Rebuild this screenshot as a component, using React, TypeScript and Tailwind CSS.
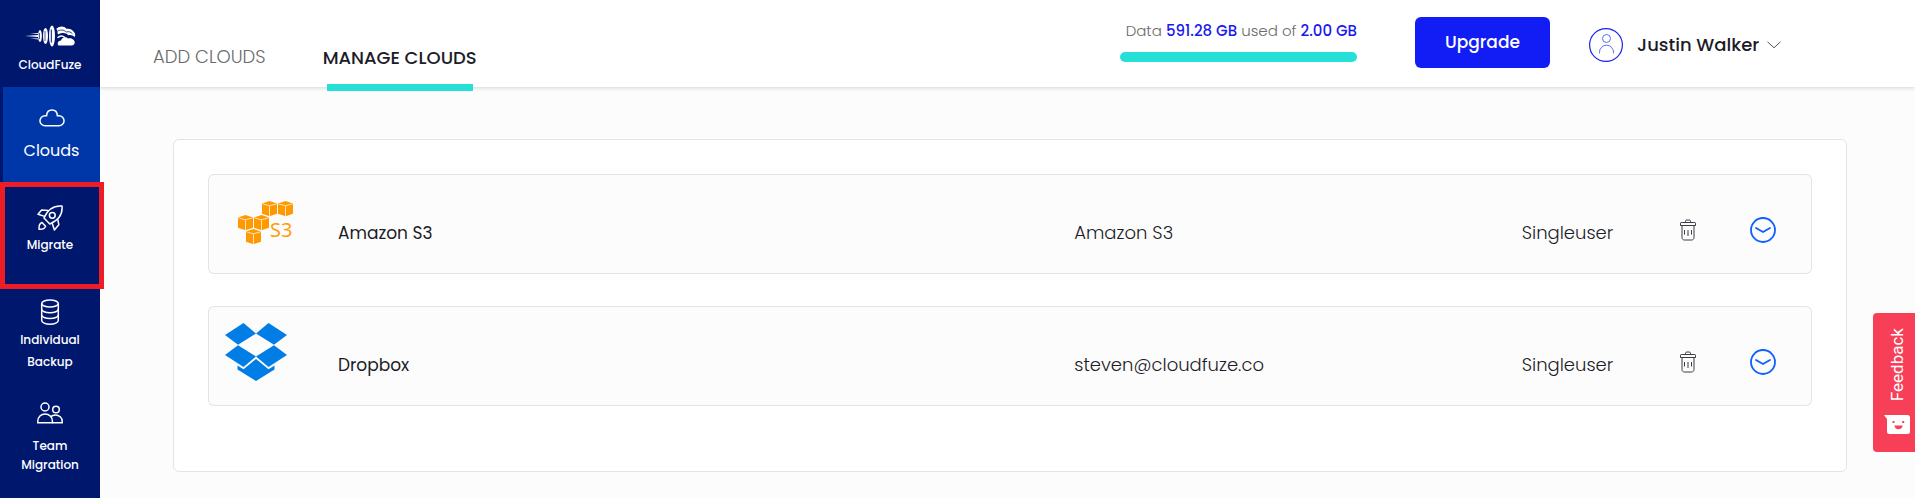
import type { ReactNode } from "react";

type CloudAccount = {
  id: string;
  name: string;
  account: string;
  type: string;
  logo: ReactNode;
};

function CloudFuzeLogo() {
  return (
    <svg width="52" height="22" viewBox="0 0 52 22" fill="none" aria-hidden="true">
      <path d="M1 11 14 10v2z M6 8.300l8-.3v.9z M6 13.300l8 .2v.9z" fill="#fff" />
      <g fill="#fff">
        <ellipse cx="16" cy="11" rx="1.900" ry="6" />
        <ellipse cx="21.500" cy="11" rx="2.500" ry="8" />
        <ellipse cx="28" cy="11" rx="3" ry="10.500" />
      </g>
      <g stroke="#00176e">
        <path d="M15.500 8v6M21 6v10" strokeWidth=".7" />
        <path d="M27.300 4.500v13" strokeWidth="1" />
      </g>
      <path
        d="M32.500 3.500C36 .6 40 .8 42.500 3.800c3.200-.6 5.600.4 7 2.700 1.600 1.500 2.200 3.500 1.300 5.500-2-2-4.500-2.500-6.500-1.800-2.300-2.600-6-2.900-10.300-.7z"
        fill="#fff"
      />
      <path d="M33 6.400c3-2 7-1.800 9.200.6 2.400-.8 5 0 6.300 1.800" stroke="#00176e" strokeWidth=".8" />
      <path
        d="M34.500 20.500c-2-2 .2-5.200 2.500-5 1.200-3.400 5-4.200 7.200-2.100 3-.8 6.300 1.200 6.500 3.800.1 1.900-1.200 3.300-3 3.300z"
        fill="#fff"
      />
      <path d="M33.500 12.800c2.500-2.200 5.500-2 7.400-.3" stroke="#fff" strokeWidth="1.500" />
    </svg>
  );
}

function CloudIcon() {
  return (
    <svg width="26" height="18" viewBox="0 0 26 18" fill="none" stroke="#fff" strokeWidth="1.500" aria-hidden="true">
      <path d="M6 16.800h14a5 5 0 0 0 0-10.100h-1.600C18.200 3.300 16 1 13 1S7.800 3.300 7.600 6.700H6a5 5 0 0 0 0 10.100z" />
    </svg>
  );
}

function RocketIcon() {
  return (
    <svg
      width="26"
      height="26"
      viewBox="0 0 26 26"
      fill="none"
      stroke="#fff"
      strokeWidth="1.500"
      strokeLinejoin="round"
      aria-hidden="true"
    >
      <path d="M25 1C17 .4 11 3.500 7 13l5.800 6C22 15.200 25.800 9 25 1z" />
      <circle cx="15.300" cy="10.300" r="2.900" />
      <path d="M11.300 5.600 4.600 5 1 9.200 7.600 11.400" />
      <path d="M20.800 14.500l1 5.200L17.400 25l-2.200-6.800" />
      <path d="M5 17.500c-2.600.9-3.200 3.200-3 6.800 3.400.3 5.600-.6 6.600-3z" />
    </svg>
  );
}

function DatabaseIcon() {
  return (
    <svg width="20" height="26" viewBox="0 0 20 26" fill="none" stroke="#fff" strokeWidth="1.500" aria-hidden="true">
      <ellipse cx="10" cy="4.500" rx="8.300" ry="3.600" />
      <path d="M1.700 4.500v17c0 2 3.700 3.700 8.300 3.700s8.300-1.700 8.300-3.700v-17" />
      <path d="M1.700 10.200c0 2 3.700 3.600 8.300 3.600s8.300-1.600 8.300-3.600M1.700 15.900c0 2 3.700 3.600 8.300 3.600s8.300-1.600 8.300-3.600" />
    </svg>
  );
}

function TeamIcon() {
  return (
    <svg width="26" height="22" viewBox="0 0 26 22" fill="none" stroke="#fff" strokeWidth="1.500" aria-hidden="true">
      <circle cx="8" cy="5" r="4" />
      <circle cx="19" cy="7.500" r="3.300" />
      <path d="M.8 20.800v-1.600a7.300 7.300 0 0 1 14.600 0v1.600z" />
      <path d="M13.800 14.600c1.200-1.100 2.800-1.700 4.600-1.700 3.800 0 6.800 2.800 6.800 6.400v1.500h-9.800" />
    </svg>
  );
}

function Cube({ x, y }: { x: number; y: number }) {
  return (
    <g transform={`translate(${x} ${y})`}>
      <path d="M0 2.400 7.500 0 15 2.400v10.400L7.500 15.200 0 12.800z" fill="#ff9900" />
      <path d="M.4 2.800 7.500 4.800l7.100-2M7.500 4.800V15" stroke="#ffe3b8" strokeWidth="1" fill="none" />
    </g>
  );
}

function AmazonS3Logo() {
  return (
    <svg width="56" height="44" viewBox="0 0 56 44" className="mb-[3px] ml-[29px]" aria-hidden="true">
      <Cube x={24} y={0} />
      <Cube x={40} y={0} />
      <Cube x={0} y={14} />
      <Cube x={16} y={14} />
      <Cube x={8} y={28} />
      <text x="32" y="36" fontSize="20" fontWeight="500" fontFamily="Open Sans, sans-serif" fill="#ff9900">
        S3
      </text>
    </svg>
  );
}

function DropboxLogo() {
  return (
    <svg width="62" height="58" viewBox="0 0 62 58" fill="#007ee5" className="mb-2 ml-4" aria-hidden="true">
      <path d="M18.500 0 31 10.400 13 21.800 0 12z" />
      <path d="M43.500 0 31 10.400l18 11.400L62 12z" />
      <path d="M13 22.200 31 33.600 18.500 44 0 32z" />
      <path d="M49 22.200 31 33.600 43.500 44 62 32z" />
      <path d="M31 36 43.500 46.300 49.500 42.600v3.800L31 58 12.500 46.400v-3.800l6 3.700z" />
    </svg>
  );
}

function TrashIcon() {
  return (
    <svg width="16" height="22" viewBox="0 0 16 22" fill="none" stroke="#3a3a44" aria-hidden="true">
      <path d="M5.500 3V2.300C5.500 1.500 6 1 6.800 1h2.400c.8 0 1.300.5 1.300 1.300V3" />
      <path d="M.5 6.500V4.200c0-.5.300-.7.8-.7h13.400c.5 0 .8.200.8.700v2.300z" />
      <path d="M2 6.500v12c0 1.600 1 2.500 2.500 2.500h7c1.500 0 2.500-.9 2.500-2.500v-12" />
      <path d="M4.500 11v4.500M8 11v6M11.500 11v4.500" />
    </svg>
  );
}

function ExpandIcon() {
  return (
    <svg width="26" height="26" viewBox="0 0 26 26" fill="none" stroke="#0d5fff" strokeWidth="1.800" aria-hidden="true">
      <circle cx="13" cy="13" r="12" />
      <path d="M6 11l7 4 7-4" strokeLinecap="round" />
    </svg>
  );
}

const accounts: CloudAccount[] = [
  { id: "s3", name: "Amazon S3", account: "Amazon S3", type: "Singleuser", logo: <AmazonS3Logo /> },
  { id: "dropbox", name: "Dropbox", account: "steven@cloudfuze.co", type: "Singleuser", logo: <DropboxLogo /> },
];

function Sidebar() {
  return (
    <aside className="w-[100px] shrink-0 bg-[#00176e] text-center text-xs font-medium text-white">
      <a href="#home" className="flex h-[87px] flex-col items-center gap-2 pt-[25px] leading-5">
        <CloudFuzeLogo />
        CloudFuze
      </a>
      <nav>
        <a
          href="#clouds"
          className="ml-[3px] flex h-[95px] flex-col items-center gap-3 bg-[#0037a8] pt-[22px] text-base leading-6 font-normal"
        >
          <CloudIcon />
          Clouds
        </a>
        <a href="#migrate" className="relative flex h-[107px] flex-col items-center gap-1 pt-[23px] leading-5">
          <RocketIcon />
          Migrate
          <span className="absolute inset-y-0 -right-1 left-0 z-10 border-[5px] border-[#ee1c25]" />
        </a>
        <a href="#backup" className="flex h-[113px] flex-col items-center gap-1 pt-[10px] leading-[22px]">
          <DatabaseIcon />
          <span>
            Individual
            <br />
            Backup
          </span>
        </a>
        <a href="#team" className="flex flex-col items-center gap-3 pb-5 leading-[19px]">
          <TeamIcon />
          <span>
            Team
            <br />
            Migration
          </span>
        </a>
      </nav>
    </aside>
  );
}

function Header() {
  return (
    <header className="flex h-[87px] bg-white shadow-[0_1px_4px_rgba(0,0,0,0.16)]">
      <nav className="flex gap-[57px] pl-[53px] text-lg">
        <a href="#add" className="flex items-center pt-[26px] font-light text-[#6b6b6b]">
          ADD CLOUDS
        </a>
        <a href="#manage" aria-current="page" className="relative flex items-center pt-7 font-medium text-[#1c1c28]">
          MANAGE CLOUDS
          <span className="absolute inset-x-1 -bottom-1 h-[7px] bg-[#26e0d8]" />
        </a>
      </nav>
      <div className="ml-auto flex items-start pr-[134px]">
        <div className="w-[237px] pt-5 text-right text-[15px] text-[#1a1aee]">
          <p className="leading-[22px] whitespace-nowrap">
            <span className="font-light text-[#6b6b6b]">Data </span>
            <span className="font-medium">591.28 GB</span>
            <span className="font-light text-[#6b6b6b]"> used of </span>
            <span className="font-medium">2.00 GB</span>
          </p>
          <div className="mt-[10px] h-[10px] rounded-full bg-[#26e0d8]" />
        </div>
        <button
          type="button"
          className="mt-[17px] ml-[58px] h-[51px] w-[135px] rounded-md bg-[#121df5] text-[17px] font-medium text-white"
        >
          Upgrade
        </button>
        <button type="button" className="mt-7 ml-[39px] flex items-center text-[#1c1c28]">
          <svg width="34" height="34" viewBox="0 0 34 34" fill="none" stroke="#1a22f0" aria-hidden="true">
            <circle cx="17" cy="17" r="16.400" strokeWidth="1.200" />
            <g stroke="#5a6cf5">
              <circle cx="17.500" cy="10.500" r="4" />
              <path d="M10.500 25.500v-1.300a7 7 0 0 1 14 0v1.300" />
            </g>
          </svg>
          <span className="ml-[14px] w-[130px] text-left text-lg font-medium whitespace-nowrap">Justin Walker</span>
          <svg width="14" height="8" viewBox="0 0 14 8" fill="none" stroke="#555" aria-hidden="true">
            <path d="M.5.8 7 6.800 13.500.8" />
          </svg>
        </button>
      </div>
    </header>
  );
}

function CloudTable() {
  return (
    <table className="w-full table-fixed border-separate border-spacing-x-0 border-spacing-y-8 text-left text-lg text-[#1c1c28]">
      <colgroup>
        <col className="w-[130px]" />
        <col className="w-[45.9%]" />
        <col className="w-[27.9%]" />
        <col />
        <col className="w-[76px]" />
        <col className="w-[86px]" />
      </colgroup>
      <tbody>
        {accounts.map((item) => (
          <tr key={item.id} className="h-[100px] *:border-y *:border-[#e4e4e4] *:bg-[#fcfcfc]">
            <td className="rounded-l-md border-l">{item.logo}</td>
            <th scope="row" className="pt-[18px] text-[17px] font-normal">
              {item.name}
            </th>
            <td className="pt-[18px] font-light">{item.account}</td>
            <td className="pt-[18px] font-light">{item.type}</td>
            <td className="pt-3">
              <button type="button" aria-label={`Delete ${item.name}`} className="mx-auto block">
                <TrashIcon />
              </button>
            </td>
            <td className="rounded-r-md border-r pt-3 pr-3">
              <button type="button" aria-label={`Expand ${item.name}`} className="mx-auto block">
                <ExpandIcon />
              </button>
            </td>
          </tr>
        ))}
      </tbody>
    </table>
  );
}

function FeedbackTab() {
  return (
    <button
      type="button"
      className="fixed top-[313px] right-0 flex h-[139px] w-[42px] flex-col items-center justify-between rounded-l bg-[#f74058] pt-[15px] pb-[18px] pl-[6px] text-white"
    >
      <span className="rotate-180 font-['Roboto','Liberation_Sans',sans-serif] text-[17px] leading-5 [writing-mode:vertical-rl]">
        Feedback
      </span>
      <svg width="26" height="19" viewBox="0 0 26 19" aria-hidden="true">
        <path d="M0 0h23.500A2.500 2.500 0 0 1 26 2.500v14a2.500 2.500 0 0 1-2.500 2.500h-18A2.500 2.500 0 0 1 3 16.500V4z" fill="#fff" />
        <path d="M8.500 6h2v2h-2zM18.200 6h2v2h-2zM10.500 10.500h8c0 5-8 5-8 0z" fill="#f74058" />
      </svg>
    </button>
  );
}

export default function App() {
  return (
    <div className="flex min-h-screen bg-[#fcfcfc] font-['Poppins','Inter',sans-serif]">
      <Sidebar />
      <div className="min-w-0 flex-1">
        <Header />
        <main className="pt-[52px] pr-[68px] pb-[25px] pl-[73px]">
          <section className="rounded-md border border-[#e4e4e4] bg-white px-[34px] pt-[2px] pb-[33px]">
            <CloudTable />
          </section>
        </main>
      </div>
      <FeedbackTab />
    </div>
  );
}
